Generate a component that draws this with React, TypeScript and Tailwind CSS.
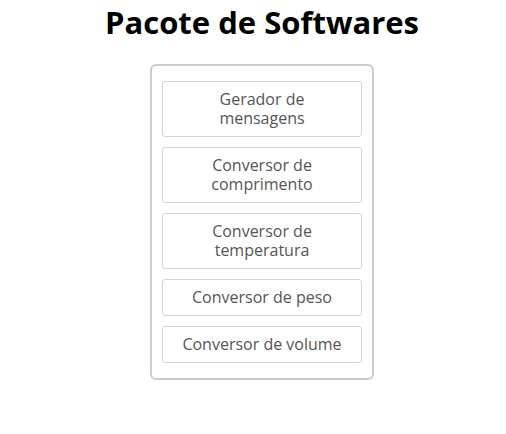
import React from 'react';

const items = [
  'Gerador de mensagens',
  'Conversor de comprimento',
  'Conversor de temperatura',
  'Conversor de peso',
  'Conversor de volume',
];

export default function App() {
  return (
    <div className="min-h-screen bg-white flex flex-col items-center pt-[3px] pl-[18px] font-['Open_Sans',sans-serif]">
      <h1 className="text-[31px] leading-[38px] font-bold text-black">Pacote de Softwares</h1>
      <div className="mt-[23px] w-[224px] border-2 border-[#cccccc] rounded-[6px] px-[10px] py-[10px] flex flex-col">
        {items.map((label) => (
          <button
            key={label}
            className="my-[5px] w-full bg-white border border-[#d4d4d4] rounded-[3px] px-[16px] py-[8px] text-[16px] leading-[19px] text-[#555555] text-center"
          >
            {label}
          </button>
        ))}
      </div>
    </div>
  );
}
